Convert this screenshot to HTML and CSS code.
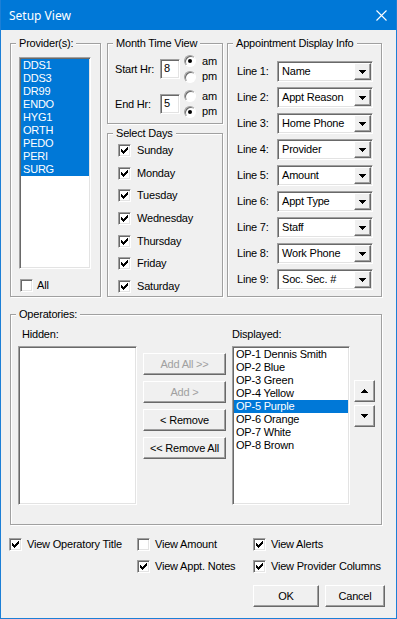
FILE: index.html
```html
<!DOCTYPE html>
<html>
<head>
<meta charset="utf-8">
<title>Setup View</title>
<link rel="stylesheet" href="styles.css">
</head>
<body>
<svg class="defs" width="0" height="0" aria-hidden="true">
  <symbol id="chk" viewBox="0 0 11 11"><path d="M8 2h1v1h-1zM7 3h2v1h-2zM2 4h1v1h-1zM6 4h3v1h-3zM2 5h2v1h-2zM5 5h3v1h-3zM2 6h5v1h-5zM3 7h3v1h-3zM4 8h1v1h-1z"/></symbol>
  <symbol id="dn" viewBox="0 0 7 4"><path d="M0 0h7v1h-7zM1 1h5v1h-5zM2 2h3v1h-3zM3 3h1v1h-1z"/></symbol>
  <symbol id="up" viewBox="0 0 7 4"><path d="M3 0h1v1h-1zM2 1h3v1h-3zM1 2h5v1h-5zM0 3h7v1h-7z"/></symbol>
</svg>
<div class="win">
  <div class="titlebar">
    <span class="title">Setup View</span>
    <svg class="close" viewBox="0 0 11 11"><path d="M0.5 0.5L10.5 10.5M10.5 0.5L0.5 10.5"/></svg>
  </div>
  <div class="client">
    <div class="toprow">
      <fieldset class="grp prov">
        <legend>Provider(s):</legend>
        <div class="list provlist">
          <div class="item sel">DDS1</div>
          <div class="item sel">DDS3</div>
          <div class="item sel">DR99</div>
          <div class="item sel">ENDO</div>
          <div class="item sel">HYG1</div>
          <div class="item sel">ORTH</div>
          <div class="item sel">PEDO</div>
          <div class="item sel">PERI</div>
          <div class="item sel">SURG</div>
        </div>
        <label class="chk allchk"><span class="box"></span><span>All</span></label>
      </fieldset>
      <div class="midcol">
        <fieldset class="grp month">
          <legend>Month Time View</legend>
          <div class="hrrow">
            <span class="hrlabel">Start Hr:</span>
            <span class="edit">8</span>
            <div class="radios">
              <label class="radio"><span class="rb on"></span>am</label>
              <label class="radio"><span class="rb"></span>pm</label>
            </div>
          </div>
          <div class="hrrow">
            <span class="hrlabel">End Hr:</span>
            <span class="edit">5</span>
            <div class="radios">
              <label class="radio"><span class="rb"></span>am</label>
              <label class="radio"><span class="rb on"></span>pm</label>
            </div>
          </div>
        </fieldset>
        <fieldset class="grp days">
          <legend>Select Days</legend>
          <div class="daylist">
            <label class="chk day"><span class="box"><svg><use href="#chk"/></svg></span>Sunday</label>
            <label class="chk day"><span class="box"><svg><use href="#chk"/></svg></span>Monday</label>
            <label class="chk day"><span class="box"><svg><use href="#chk"/></svg></span>Tuesday</label>
            <label class="chk day"><span class="box"><svg><use href="#chk"/></svg></span>Wednesday</label>
            <label class="chk day"><span class="box"><svg><use href="#chk"/></svg></span>Thursday</label>
            <label class="chk day"><span class="box"><svg><use href="#chk"/></svg></span>Friday</label>
            <label class="chk day"><span class="box"><svg><use href="#chk"/></svg></span>Saturday</label>
          </div>
        </fieldset>
      </div>
      <fieldset class="grp appt">
        <legend>Appointment Display Info</legend>
        <div class="lines">
          <div class="line"><span class="lnlabel">Line 1:</span><div class="combo"><span class="val">Name</span><span class="drop"><svg><use href="#dn"/></svg></span></div></div>
          <div class="line"><span class="lnlabel">Line 2:</span><div class="combo"><span class="val">Appt Reason</span><span class="drop"><svg><use href="#dn"/></svg></span></div></div>
          <div class="line"><span class="lnlabel">Line 3:</span><div class="combo"><span class="val">Home Phone</span><span class="drop"><svg><use href="#dn"/></svg></span></div></div>
          <div class="line"><span class="lnlabel">Line 4:</span><div class="combo"><span class="val">Provider</span><span class="drop"><svg><use href="#dn"/></svg></span></div></div>
          <div class="line"><span class="lnlabel">Line 5:</span><div class="combo"><span class="val">Amount</span><span class="drop"><svg><use href="#dn"/></svg></span></div></div>
          <div class="line"><span class="lnlabel">Line 6:</span><div class="combo"><span class="val">Appt Type</span><span class="drop"><svg><use href="#dn"/></svg></span></div></div>
          <div class="line"><span class="lnlabel">Line 7:</span><div class="combo"><span class="val">Staff</span><span class="drop"><svg><use href="#dn"/></svg></span></div></div>
          <div class="line"><span class="lnlabel">Line 8:</span><div class="combo"><span class="val">Work Phone</span><span class="drop"><svg><use href="#dn"/></svg></span></div></div>
          <div class="line"><span class="lnlabel">Line 9:</span><div class="combo"><span class="val">Soc. Sec. #</span><span class="drop"><svg><use href="#dn"/></svg></span></div></div>
        </div>
      </fieldset>
    </div>

    <fieldset class="grp ops">
      <legend>Operatories:</legend>
      <div class="opsbody">
        <div class="col hiddencol">
          <div class="collabel hidlabel">Hidden:</div>
          <div class="list oplist"></div>
        </div>
        <div class="col btncol">
          <div class="btn dis">Add All &gt;&gt;</div>
          <div class="btn dis">Add &gt;</div>
          <div class="btn">&lt; Remove</div>
          <div class="btn">&lt;&lt; Remove All</div>
        </div>
        <div class="col dispcol">
          <div class="collabel">Displayed:</div>
          <div class="list oplist">
            <div class="item">OP-1 Dennis Smith</div>
            <div class="item">OP-2 Blue</div>
            <div class="item">OP-3 Green</div>
            <div class="item">OP-4 Yellow</div>
            <div class="item sel">OP-5 Purple</div>
            <div class="item">OP-6 Orange</div>
            <div class="item">OP-7 White</div>
            <div class="item">OP-8 Brown</div>
          </div>
        </div>
        <div class="col arrowcol">
          <div class="btn arrow"><svg><use href="#up"/></svg></div>
          <div class="btn arrow"><svg><use href="#dn"/></svg></div>
        </div>
      </div>
    </fieldset>

    <div class="opts">
      <label class="chk"><span class="box"><svg><use href="#chk"/></svg></span>View Operatory Title</label>
      <label class="chk"><span class="box"></span>View Amount</label>
      <label class="chk"><span class="box"><svg><use href="#chk"/></svg></span>View Alerts</label>
      <span></span>
      <label class="chk"><span class="box"><svg><use href="#chk"/></svg></span>View Appt. Notes</label>
      <label class="chk"><span class="box"><svg><use href="#chk"/></svg></span>View Provider Columns</label>
    </div>

    <div class="actions">
      <div class="btn ok">OK</div>
      <div class="btn cancel">Cancel</div>
    </div>
  </div>
</div>
</body>
</html>
```
FILE: styles.css
```css
* { box-sizing: border-box; }
html, body { margin: 0; padding: 0; background: #f0f0f0; }
body {
  font-family: "Liberation Sans", Arial, sans-serif;
  font-size: 11px;
  line-height: 13px;
  letter-spacing: -0.2px;
  color: #000;
}
.defs { position: absolute; width: 0; height: 0; overflow: hidden; }

.win {
  width: 397px;
  height: 619px;
  background: #f0f0f0;
  border: 1px solid #1c7fd6;
  border-top: 0;
  overflow: hidden;
}
.titlebar {
  height: 30px;
  margin: 0 -1px;
  background: #0078d7;
  display: flex;
  align-items: center;
  padding-left: 9px;
  color: #fff;
  font-family: "Noto Sans", "Open Sans", sans-serif;
  font-size: 12px;
  letter-spacing: 0;
}
.close {
  margin-left: auto;
  margin-right: 10px;
  width: 11px;
  height: 11px;
  fill: none;
  stroke: #fff;
  stroke-width: 1.1;
}

.client { padding: 7px 0 0 9px; }

/* group boxes */
.grp {
  margin: 0;
  padding: 0;
  min-inline-size: 0;
  border: 1px solid #a0a0a0;
  box-shadow: inset 1px 1px 0 #fff, 1px 1px 0 #fff;
}
.grp > legend {
  margin-left: 5px;
  padding: 0 3px;
  height: 13px;
  line-height: 13px;
  background: #f0f0f0;
}

.toprow { display: flex; align-items: flex-start; }
.prov { width: 91px; height: 260px; }
.midcol { width: 116px; margin-left: 6px; display: flex; flex-direction: column; }
.month { height: 87px; }
.days { height: 170px; margin-top: 3px; }
.appt { width: 155px; height: 260px; margin-left: 4px; }

/* sunken controls */
.list, .edit, .combo, .box {
  background: #fff;
  border: 1px solid;
  border-color: #a0a0a0 #fff #fff #a0a0a0;
  box-shadow: inset 1px 1px 0 #696969, inset -1px -1px 0 #e3e3e3;
}
.list { padding: 1px; overflow: hidden; }
.item { height: 13px; line-height: 13px; padding-left: 2px; white-space: nowrap; }
.item.sel { background: #0078d7; color: #fff; }

.provlist { width: 72px; height: 212px; margin: 7px 0 0 8px; }

/* checkboxes */
.chk { display: flex; align-items: center; gap: 5px; height: 13px; white-space: nowrap; }
.box { width: 13px; height: 13px; flex: none; display: block; }
.box svg { display: block; width: 11px; height: 11px; fill: #000; shape-rendering: crispEdges; }
.allchk { margin: 10px 0 0 9px; gap: 4px; }

/* month time view */
.hrrow { display: flex; align-items: center; height: 30px; padding-left: 7px; }
.hrrow:first-of-type { margin-top: 4px; }
.hrrow + .hrrow { margin-top: 5px; }
.hrlabel { width: 45px; }
.edit { width: 20px; height: 20px; padding-left: 3px; line-height: 17px; }
.radios { display: flex; flex-direction: column; margin-left: 4px; }
.radio { display: flex; align-items: center; gap: 6px; height: 15px; }
.radio:last-child { height: 16px; }
.rb {
  position: relative;
  width: 12px;
  height: 12px;
  border-radius: 50%;
  background: #fff;
  border: 1px solid;
  border-color: #a0a0a0 #fff #fff #a0a0a0;
  box-shadow: inset 1px 1px 0 #696969;
}
.rb.on::after {
  content: "";
  position: absolute;
  left: 3px;
  top: 3px;
  width: 4px;
  height: 4px;
  border-radius: 50%;
  background: #000;
}

/* select days */
.daylist { display: flex; flex-direction: column; gap: 9.67px; margin-top: 4px; padding-left: 10px; }
.day { gap: 6px; }

/* appointment lines */
.lines { display: flex; flex-direction: column; gap: 5px; margin-top: 11px; padding-left: 9px; }
.line { display: flex; align-items: center; height: 21px; }
.lnlabel { width: 40px; }
.combo { width: 96px; height: 21px; display: flex; align-items: center; padding: 1px; }
.val { flex: 1; padding-left: 3px; white-space: nowrap; overflow: hidden; }
.drop {
  width: 17px;
  height: 17px;
  display: flex;
  align-items: center;
  justify-content: center;
  background: #f0f0f0;
  border: 1px solid;
  border-color: #fff #696969 #696969 #fff;
  box-shadow: inset -1px -1px 0 #a0a0a0;
}
.drop svg, .arrow svg { width: 7px; height: 4px; fill: #000; shape-rendering: crispEdges; display: block; }

/* operatories */
.ops { width: 372px; height: 217px; margin-top: 11px; }
.opsbody { display: flex; align-items: flex-start; padding-left: 7px; margin-top: 7px; }
.col { display: flex; flex-direction: column; }
.collabel { height: 13px; }
.hidlabel { padding-left: 4px; }
.oplist { margin-top: 5px; height: 159px; }
.hiddencol { width: 119px; }
.btncol { width: 83px; margin-left: 6px; margin-top: 25px; gap: 6px; }
.dispcol { width: 118px; margin-left: 6px; }
.arrowcol { width: 21px; margin-left: 4px; margin-top: 52px; gap: 3px; }

.btn {
  height: 22px;
  display: flex;
  align-items: center;
  justify-content: center;
  background: #f0f0f0;
  border: 1px solid;
  border-color: #fff #696969 #696969 #fff;
  box-shadow: inset -1px -1px 0 #a0a0a0;
  white-space: nowrap;
}
.btn.dis { color: #a0a0a0; }
.arrow { width: 21px; }

/* bottom options */
.opts {
  display: grid;
  grid-template-columns: 128px 116px auto;
  row-gap: 9px;
  margin: 13px 0 0 -1px;
}

.actions { display: flex; justify-content: flex-end; gap: 6px; margin-top: 12px; padding-right: 11px; }
.ok { width: 66px; }
.cancel { width: 60px; }
```
